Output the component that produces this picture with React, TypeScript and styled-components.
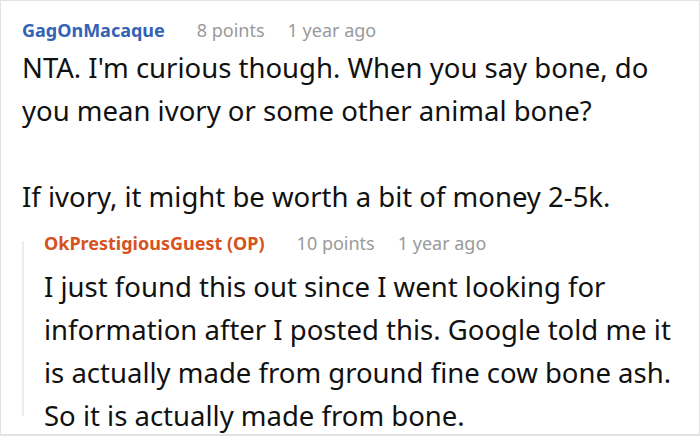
import styled, { createGlobalStyle } from "styled-components";

const GlobalStyle = createGlobalStyle`
  html, body {
    margin: 0;
    padding: 0;
    background: #ffffff;
  }
  body {
    font-family: "Noto Sans", "Open Sans", sans-serif;
  }
`;

const Frame = styled.div`
  box-sizing: border-box;
  width: 700px;
  height: 436px;
  border: 1px solid #e2e2e2;
  border-bottom-width: 2px;
  padding: 13px 6px 0 21px;
  overflow: hidden;
  background: #fff;
`;

const Comment = styled.div`
  display: flex;
  flex-direction: column;
`;

const Meta = styled.div<{ $after?: number }>`
  display: flex;
  align-items: baseline;
  gap: 23px;
  font-size: 18px;
  line-height: 32px;
  margin-bottom: ${(p) => p.$after ?? 0}px;
`;

const Author = styled.span<{ $color: string }>`
  color: ${(p) => p.$color};
  font-weight: 700;
  margin-right: 9px;
`;

const Muted = styled.span`
  color: #9a9a9a;
`;

const Body = styled.p`
  margin: 0;
  color: #111;
  font-size: 27.5px;
  line-height: 43px;
  white-space: nowrap;
`;

const Reply = styled.div`
  position: relative;
  margin-top: 9px;
  padding-left: 22px;

  &::before {
    content: "";
    position: absolute;
    left: 0;
    top: 14px;
    width: 2px;
    height: 175px;
    background: #ececec;
  }
`;

export default function App() {
  return (
    <>
      <GlobalStyle />
      <Frame>
        <Comment>
          <Meta>
            <Author $color="#3462b4">GagOnMacaque</Author>
            <Muted>8 points</Muted>
            <Muted>1 year ago</Muted>
          </Meta>
          <Body>
            NTA. I'm curious though. When you say bone, do
            <br />
            you mean ivory or some other animal bone?
            <br />
            <br />
            If ivory, it might be worth a bit of money 2-5k.
          </Body>
          <Reply>
            <Comment>
              <Meta $after={6}>
                <Author $color="#d6521e">OkPrestigiousGuest (OP)</Author>
                <Muted>10 points</Muted>
                <Muted>1 year ago</Muted>
              </Meta>
              <Body>
                I just found this out since I went looking for
                <br />
                information after I posted this. Google told me it
                <br />
                is actually made from ground fine cow bone ash.
                <br />
                So it is actually made from bone.
              </Body>
            </Comment>
          </Reply>
        </Comment>
      </Frame>
    </>
  );
}
